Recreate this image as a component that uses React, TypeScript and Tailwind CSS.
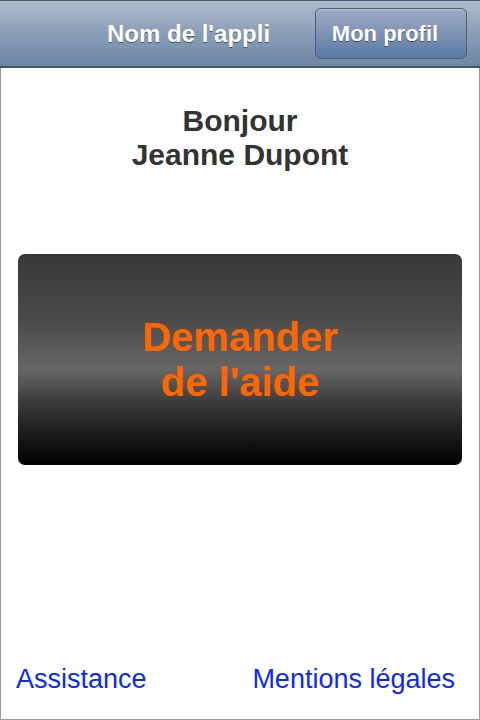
import React from "react";

const App = () => {
  return (
    <div
      className="flex flex-col h-[720px] w-[480px] bg-white border-x border-b border-[#999999]"
      style={{ fontFamily: '"Liberation Sans", Arial, sans-serif' }}
    >
      {/* header bar */}
      <header className="flex items-center h-[68px] shrink-0 -mx-px border-t border-b-2 border-t-[#4e5d72] border-b-[#435770] bg-gradient-to-b from-[#b0bccd] via-[#8a9db7] to-[#6d87a6]">
        <h1 className="ml-[107px] text-[24px] font-bold text-white [text-shadow:0_1px_0_#44556b]">
          Nom de l'appli
        </h1>
        <button className="ml-auto mr-[13px] h-[51px] w-[152px] pr-[12px] rounded-[6px] border border-[#505b6b] bg-gradient-to-b from-[#a0aac6] to-[#5a7aa4] text-[22px] font-bold text-white [text-shadow:0_1px_0_#3d4c63] shadow-[inset_0_1px_0_rgba(255,255,255,0.3)]">
          Mon profil
        </button>
      </header>

      <main className="flex-1 flex flex-col px-[17px]">
        <div className="mt-[36px] text-center text-[30px] leading-[34px] font-bold text-[#333333]">
          <div>Bonjour</div>
          <div>Jeanne Dupont</div>
        </div>

        <button className="mt-[82px] h-[211px] w-full rounded-[7px] bg-[linear-gradient(to_bottom,#383838_0%,#4a4a4a_30%,#666666_55%,#3c3c3c_70%,#161616_88%,#000000_100%)] text-[40px] leading-[45px] font-bold text-[#ff6600]">
          Demander
          <br />
          de l'aide
        </button>

        <div className="mt-auto mb-[20px] flex items-center justify-between pr-[7px] text-[27px] text-[#0a28ff]">
          <a href="#" className="-ml-[2px]">Assistance</a>
          <a href="#">Mentions légales</a>
        </div>
      </main>
    </div>
  );
};

export default App;
